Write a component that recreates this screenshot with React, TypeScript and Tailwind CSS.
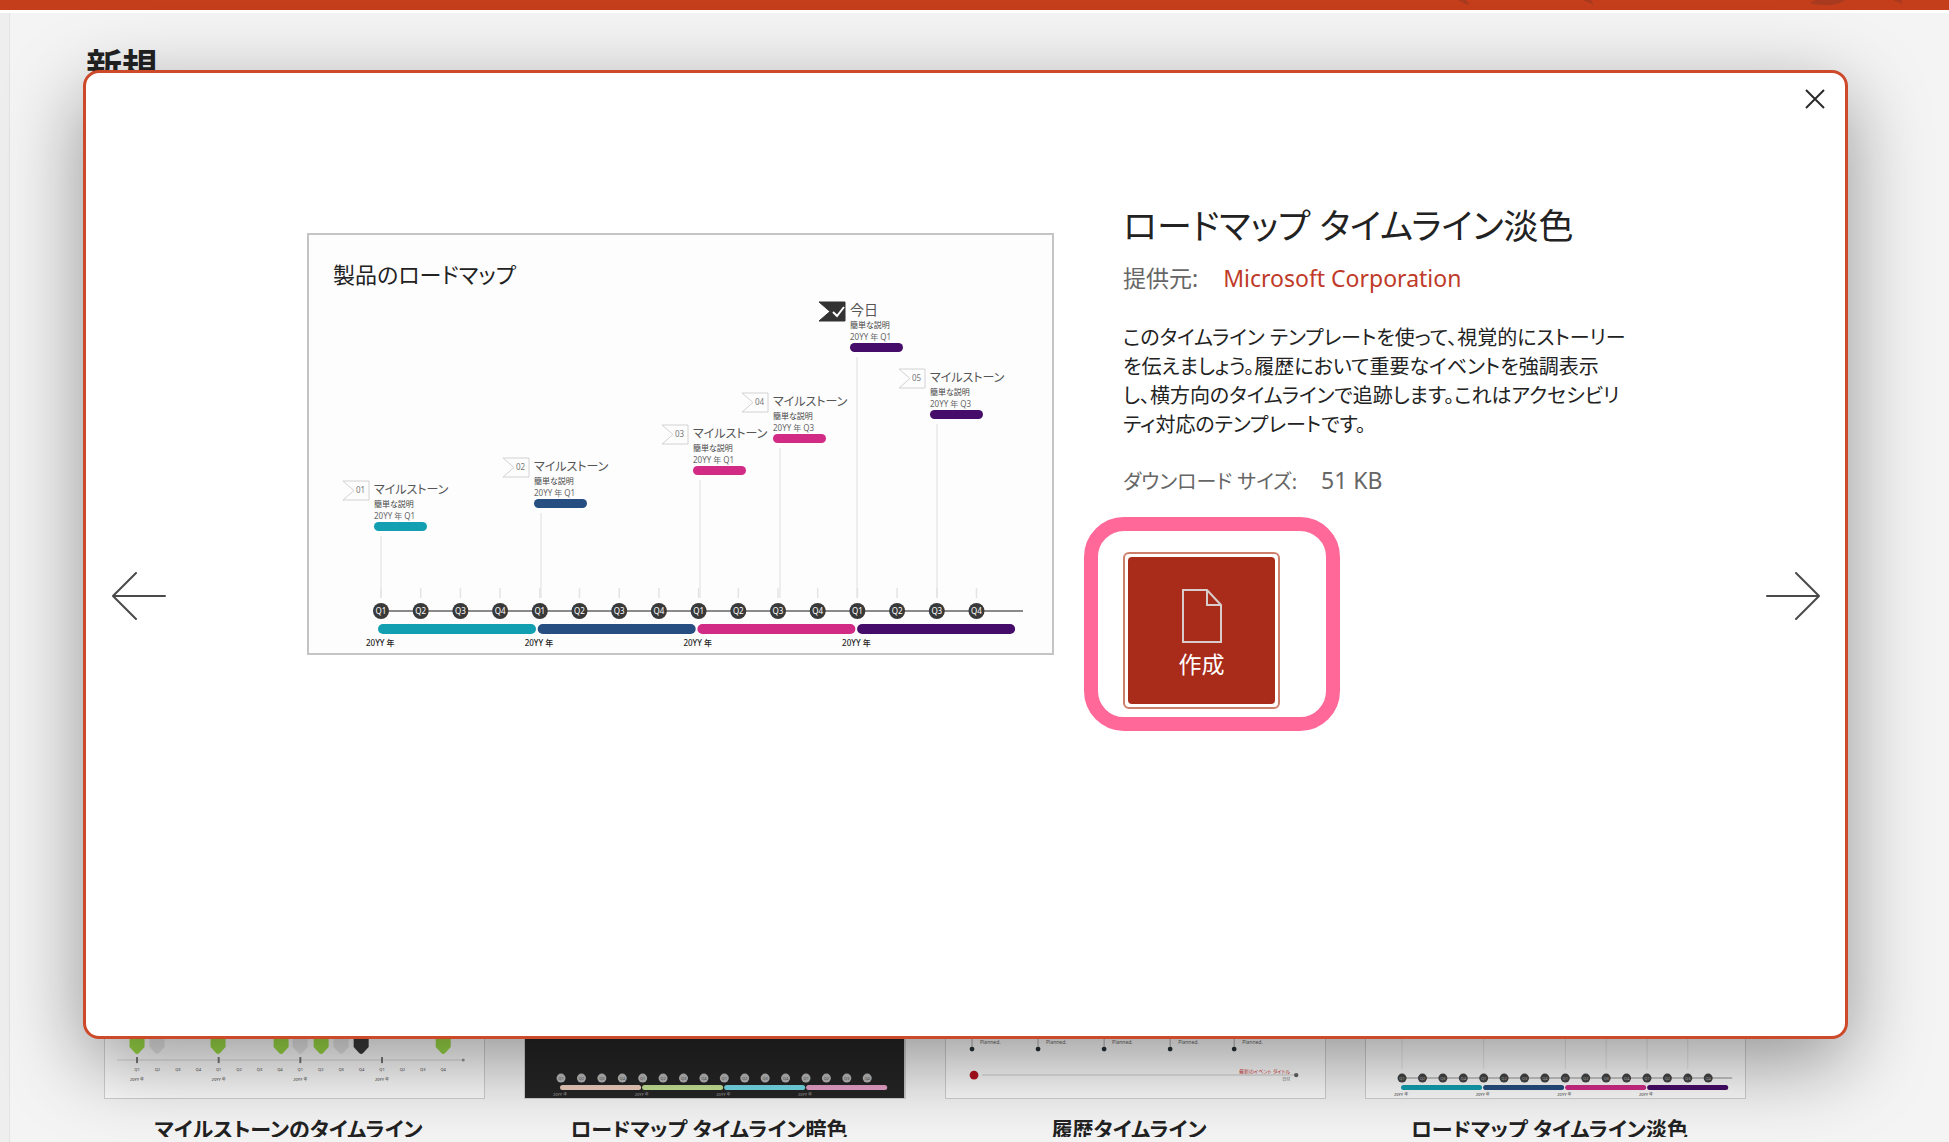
import React from 'react';

const QUARTERS = Array.from({ length: 16 }, (_, i) => i);

type Milestone = { x: number; y: number; no: string; name: string; date: string; color: string };

const milestones: Milestone[] = [
  { x: 67, y: 248, no: '01', name: 'マイルストーン', date: '20YY 年 Q1', color: '#129fb1' },
  { x: 227, y: 225, no: '02', name: 'マイルストーン', date: '20YY 年 Q1', color: '#264e80' },
  { x: 386, y: 192, no: '03', name: 'マイルストーン', date: '20YY 年 Q1', color: '#d12b86' },
  { x: 466, y: 160, no: '04', name: 'マイルストーン', date: '20YY 年 Q3', color: '#d12b86' },
  { x: 543, y: 69, no: '', name: '今日', date: '20YY 年 Q1', color: '#460c69' },
  { x: 623, y: 136, no: '05', name: 'マイルストーン', date: '20YY 年 Q3', color: '#460c69' },
];

const lightYears = ['#129fb1', '#264e80', '#d12b86', '#460c69'];
const darkYears = ['#f0cfbf', '#c3e295', '#74dbe8', '#e9a1ca'];

function RoadmapSlide() {
  return (
    <svg viewBox="0 0 743 418" className="block w-full" role="img" aria-label="製品のロードマップ">
      <g transform="translate(-2 -2)">
        <text x="26" y="50" fontSize="22" fill="#222">製品のロードマップ</text>
        {milestones.map((m) => (
          <g key={m.x}>
            <line x1={m.x + 7} x2={m.x + 7} y1={m.y + 55} y2="365" stroke="#e9e9e9" strokeWidth="1.5" />
            <path
              d={`M${m.x - 31} ${m.y}h26v19h-26l11-9.5z`}
              fill={m.no ? '#fdfdfd' : '#333'}
              stroke={m.no ? '#d2d2d2' : '#333'}
            />
            {m.no ? (
              <text x={m.x - 18} y={m.y + 12} fontSize="8" fill="#777">{m.no}</text>
            ) : (
              <path d={`M${m.x - 17} ${m.y + 10}l4 4l7 -9`} fill="none" stroke="#fff" strokeWidth="2" />
            )}
            <text x={m.x} y={m.y + 13} fontSize={m.no ? 12 : 14} fill="#555">{m.name}</text>
            <text x={m.x} y={m.y + 26} fontSize="8" fill="#444">簡単な説明</text>
            <text x={m.x} y={m.y + 38} fontSize="8" fill="#666">{m.date}</text>
            <rect x={m.x} y={m.y + 41} width="53" height="9" rx="4.5" fill={m.color} />
          </g>
        ))}
        <line x1="74" x2="716" y1="378" y2="378" stroke="#8a8a8a" strokeWidth="2" />
        {QUARTERS.map((q) => (
          <g key={q}>
            <line x1={74 + q * 39.7} x2={74 + q * 39.7} y1="355" y2="365" stroke="#e4e4e4" strokeWidth="1.5" />
            <circle cx={74 + q * 39.7} cy="378" r="8" fill="#393939" />
            <text x={74 + q * 39.7} y="381" fontSize="8" fill="#fff" textAnchor="middle">{`Q${(q % 4) + 1}`}</text>
          </g>
        ))}
        {lightYears.map((c, i) => (
          <g key={c}>
            <rect x={71 + i * 159.7} y="391" width="158" height="10" rx="5" fill={c} />
            <text x={59 + i * 158.7} y="413" fontSize="8" fill="#222" fontWeight="500">20YY 年</text>
          </g>
        ))}
      </g>
    </svg>
  );
}

function RoadmapThumb({ dark }: { dark?: boolean }) {
  const years = dark ? darkYears : lightYears;
  return (
    <svg viewBox="0 0 379 213" className="block w-full" aria-hidden="true">
      {dark && <rect width="379" height="213" fill="#252525" />}
      {!dark &&
        [0, 4, 8, 10, 12, 14].map((q) => (
          <line key={q} x1={36 + q * 20.4} x2={36 + q * 20.4} y1="120" y2="184" stroke="#e4e4e4" />
        ))}
      {!dark && <line x1="36" x2="366" y1="193" y2="193" stroke="#b5b5b5" strokeWidth="1.5" />}
      {QUARTERS.map((q) => (
        <g key={q}>
          <circle cx={36 + q * 20.4} cy="193" r="4.5" fill={dark ? '#b9b9b9' : '#444'} />
          <text x={36 + q * 20.4} y="195" fontSize="4" textAnchor="middle" fill={dark ? '#555' : '#bbb'}>
            {`Q${(q % 4) + 1}`}
          </text>
        </g>
      ))}
      {years.map((c, i) => (
        <g key={c}>
          <rect x={35 + i * 82} y="200" width="81" height="5" rx="2.5" fill={c} />
          <text x={28 + i * 81.6} y="211" fontSize="4" fill={dark ? '#aaa' : '#333'}>20YY 年</text>
        </g>
      ))}
    </svg>
  );
}

const pins = [
  { x: 32, c: '#9bdb47' },
  { x: 52, c: '#e6e6e6' },
  { x: 113, c: '#9bdb47' },
  { x: 176, c: '#9bdb47' },
  { x: 195, c: '#e6e6e6' },
  { x: 216, c: '#9bdb47' },
  { x: 236, c: '#e6e6e6' },
  { x: 256, c: '#3a3a3a' },
  { x: 338, c: '#9bdb47' },
];

function MilestoneThumb() {
  return (
    <svg viewBox="0 0 379 213" className="block w-full" aria-hidden="true">
      {pins.map((p) => (
        <path key={p.x} d={`M${p.x - 7.5} 145h15v17l-5.5 6q-2 2 -4 0l-5.5 -6z`} fill={p.c} />
      ))}
      <line x1="12" x2="358" y1="175" y2="175" stroke="#e2e2e2" strokeWidth="1.5" />
      <circle cx="358" cy="175" r="1.5" fill="#999" />
      {QUARTERS.map((q) => (
        <g key={q}>
          {q % 4 === 0 && <line x1={32 + q * 20.4} x2={32 + q * 20.4} y1="172" y2="178" stroke="#777" strokeWidth="2" />}
          <text x={32 + q * 20.4} y="186" fontSize="4" fill="#444" textAnchor="middle">{`Q${(q % 4) + 1}`}</text>
          {q % 4 === 0 && (
            <text x={32 + q * 20.4} y="196" fontSize="4" fill="#333" textAnchor="middle">20YY 年</text>
          )}
        </g>
      ))}
    </svg>
  );
}

function HistoryThumb() {
  return (
    <svg viewBox="0 0 379 213" className="block w-full" aria-hidden="true">
      {[26, 92, 158, 224, 288].map((x) => (
        <g key={x}>
          <line x1={x} x2={x} y1="130" y2="164" stroke="#aaa" />
          <circle cx={x} cy="164" r="2.4" fill="#263238" />
          <text x={x + 8} y="159" fontSize="5" fill="#666">Planned.</text>
        </g>
      ))}
      <line x1="36" x2="350" y1="190" y2="190" stroke="#dcdcdc" strokeWidth="1.5" />
      <circle cx="28" cy="190" r="4.4" fill="#b5121f" />
      <circle cx="350" cy="190" r="2.2" fill="#666" />
      <text x="344" y="188" fontSize="5" fill="#d03a3a" textAnchor="end">最新のイベント タイトル</text>
      <text x="344" y="196" fontSize="4" fill="#666" textAnchor="end">日付</text>
    </svg>
  );
}

const templates = [
  { name: 'マイルストーンのタイムライン', art: <MilestoneThumb /> },
  { name: 'ロードマップ タイムライン暗色', art: <RoadmapThumb dark /> },
  { name: '履歴タイムライン', art: <HistoryThumb /> },
  { name: 'ロードマップ タイムライン淡色', art: <RoadmapThumb /> },
];

function Arrow({ flip }: { flip?: boolean }) {
  return (
    <svg viewBox="0 0 54 48" className="block h-12 w-[54px]" fill="none" stroke="#4a4a4a" strokeWidth="2" strokeLinecap="round">
      {flip ? <path d="M1 24H53M30 1L53 24L30 47" /> : <path d="M53 24H1M24 1L1 24L24 47" />}
    </svg>
  );
}

export default function App() {
  return (
    <div className="relative flex h-screen flex-col overflow-hidden bg-[#f4f4f4] font-['Noto_Sans','Noto_Sans_CJK_JP',sans-serif] text-[#222] [font-feature-settings:'palt']">
      <header className="flex h-[13px] shrink-0 justify-end border-b-[3px] border-white bg-[#c43e1c]">
        <svg viewBox="0 0 500 10" className="h-[10px] w-[500px]" fill="#a83a20" aria-hidden="true">
          <path d="M9 0h8q2 3 4 4q-2 1-5 0zM134 0h8l3 5zM361 3q3-3 7-3h28q-6 5-18 5t-17-2zM444 0h8l2 4z" />
        </svg>
      </header>

      <div className="flex min-h-0 flex-1">
        <div className="w-[10px] shrink-0 border-r border-[#e2e2e2] bg-[#eeeeee]" />
        <main className="flex min-w-0 flex-1 flex-col pt-[28px] pr-[203px] pb-[5px] pl-[94px]">
          <h1 className="-ml-[18px] text-[36px] leading-[52px] font-bold">新規</h1>
          <ul className="mt-auto grid grid-cols-4 gap-[39px]">
            {templates.map((t) => (
              <li key={t.name}>
                <div className="overflow-hidden border border-[#cfcfcf] bg-[#fcfcfc]">{t.art}</div>
                <p className="mt-[16px] h-[22px] overflow-hidden pr-[12px] text-center text-[21px] leading-[29px] font-bold whitespace-nowrap">
                  {t.name}
                </p>
              </li>
            ))}
          </ul>
        </main>
      </div>

      <div
        role="dialog"
        aria-labelledby="template-title"
        className="absolute top-[70px] right-[101px] bottom-[103px] left-[83px] flex flex-col rounded-[16px] border-[3px] border-[#cc4a2a] bg-white shadow-[0_24px_80px_rgba(0,0,0,0.4)]"
      >
        <div className="flex h-[52px] shrink-0 items-center justify-end pr-[20px]">
          <button type="button" aria-label="閉じる" className="block">
            <svg viewBox="0 0 20 20" className="block size-5" fill="none" stroke="#2a2a2a" strokeWidth="2">
              <path d="M1 1L19 19M19 1L1 19" />
            </svg>
          </button>
        </div>

        <div className="flex min-h-0 flex-1 items-center pt-[30px] pr-[25px] pl-[26px]">
          <button type="button" aria-label="前へ" className="shrink-0">
            <Arrow />
          </button>

          <figure className="mt-[78px] ml-[141px] min-w-0 flex-1 self-start border-2 border-[#c4c4c4] bg-[#fdfdfd]">
            <RoadmapSlide />
          </figure>

          <section className="mt-[46px] ml-[69px] w-[530px] shrink-0 self-start whitespace-nowrap">
            <h2 id="template-title" className="text-[35px] leading-[50px]">ロードマップ タイムライン淡色</h2>
            <p className="mt-[10px] flex items-baseline gap-[25px] text-[23px] leading-[34px] text-[#666]">
              <span>提供元:</span>
              <a href="#microsoft" className="text-[#bf3a28]">Microsoft Corporation</a>
            </p>
            <p className="mt-[28px] text-[20px] leading-[29px]">
              このタイムライン テンプレートを使って、視覚的にストーリー
              <br />
              を伝えましょう。履歴において重要なイベントを強調表示
              <br />
              し、横方向のタイムラインで追跡します。これはアクセシビリ
              <br />
              ティ対応のテンプレートです。
            </p>
            <p className="mt-[24px] flex items-baseline gap-[24px] text-[20px] leading-[34px] text-[#666]">
              <span>ダウンロード サイズ:</span>
              <span className="text-[23px]">51 KB</span>
            </p>
            <div className="mt-[18px] -ml-[39px] w-[256px] rounded-[40px] border-[14px] border-[#ff6899] px-[25px] pt-[21px] pb-[8px]">
              <button
                type="button"
                className="block size-[157px] rounded-md border-2 border-[#cd7f6c] bg-white p-[3px] text-white"
              >
                <span className="flex size-full flex-col items-center rounded-sm bg-[#a92b1a] pt-[32px]">
                  <svg viewBox="0 0 40 54" className="block h-[54px] w-[40px]" fill="none" stroke="#d8cccc" strokeWidth="2">
                    <path d="M1 1H25L39 16V53H1ZM25 1V16H39" />
                  </svg>
                  <span className="mt-[4px] text-[23px] leading-[34px]">作成</span>
                </span>
              </button>
            </div>
          </section>

          <button type="button" aria-label="次へ" className="ml-[113px] shrink-0">
            <Arrow flip />
          </button>
        </div>
      </div>
    </div>
  );
}
